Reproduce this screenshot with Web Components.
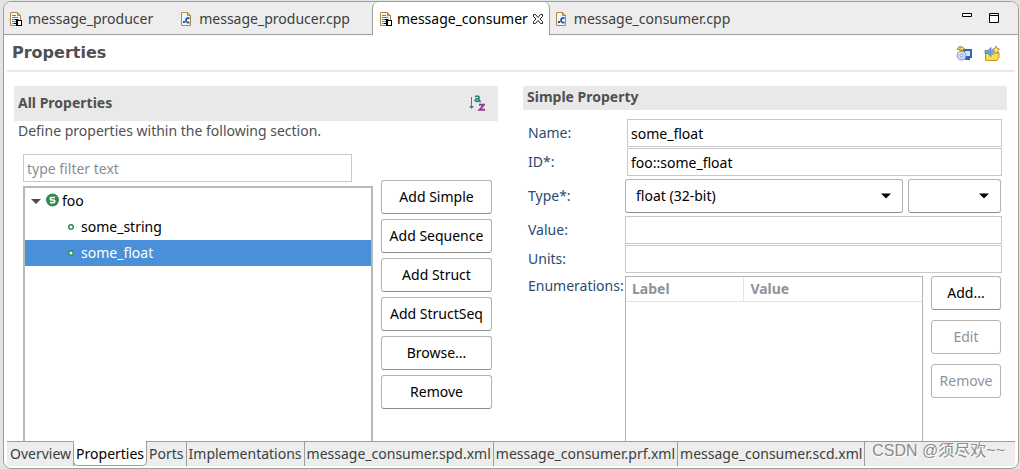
<!DOCTYPE html>
<html lang="en">
<head>
<meta charset="utf-8">
<title>message_consumer - Properties</title>
<style>
  html, body { margin: 0; }
  body {
    min-height: 100vh;
    display: flex;
    background: #e4e4e4;
    font: 14px/20px "Noto Sans", "Noto Sans CJK SC", sans-serif;
    color: #000;
  }
</style>
</head>
<body>
<editor-window></editor-window>

<template id="t-window">
  <style>
    :host { display: flex; flex: 1; min-width: 0; padding: 1px 1px 0 3px; }
    * { box-sizing: border-box; }
    .frame {
      flex: 1; min-width: 0; display: flex; flex-direction: column;
      background: #fff; border: 1px solid #9d9e9b; border-radius: 8px; overflow: hidden;
    }
    .tabs { display: flex; height: 33px; background: linear-gradient(#9d9e9b, #9d9e9b) bottom / 100% 1px no-repeat #ededed; }
    .controls { margin-left: auto; display: flex; gap: 15px; padding: 8px 18px 0 0; }
    .controls button, .tools button { display: block; border: 0; padding: 0; background: none; height: 16px; }
    header { display: flex; align-items: center; justify-content: space-between; height: 37px; margin: 0 3px; padding: 0 15px 0 5px; border-bottom: 2px solid #e8e8e8; }
    h1 { margin: 0; font: bold 16px/20px "DejaVu Sans", sans-serif; color: #505050; }
    .tools { display: flex; gap: 12px; }
    main { flex: 1; display: grid; grid-template-columns: minmax(0, 1fr) minmax(0, 1fr); gap: 25px; padding: 14px 11px 0 10px; }
    footer { display: flex; height: 25px; margin: 0 3px 2px; padding-left: 1px; background: linear-gradient(#9d9e9b, #9d9e9b) top / 100% 1px no-repeat #ededed; }
    .mark { margin-left: auto; padding-right: 10px; font: 16px/20px "Liberation Sans", "Noto Sans CJK SC", sans-serif; color: #8c8c8c; text-shadow: 1px 1px 0 #fff; white-space: nowrap; }
  </style>
  <div class="frame">
    <div class="tabs" role="tablist" aria-label="Open editors">
      <editor-tab icon="doc">message_producer</editor-tab>
      <editor-tab icon="cfile">message_producer.cpp</editor-tab>
      <editor-tab icon="doc" active>message_consumer</editor-tab>
      <editor-tab icon="cfile">message_consumer.cpp</editor-tab>
      <div class="controls">
        <button aria-label="Minimize"><ui-icon name="min"></ui-icon></button>
        <button aria-label="Maximize"><ui-icon name="max"></ui-icon></button>
      </div>
    </div>
    <header>
      <h1>Properties</h1>
      <div class="tools">
        <button aria-label="Deploy"><ui-icon name="deploy"></ui-icon></button>
        <button aria-label="Export"><ui-icon name="export"></ui-icon></button>
      </div>
    </header>
    <main>
      <section-panel heading="All Properties" tall>
        <ui-icon slot="action" name="sort"></ui-icon>
        <property-browser></property-browser>
      </section-panel>
      <section-panel heading="Simple Property">
        <property-form></property-form>
      </section-panel>
    </main>
    <footer role="tablist" aria-label="Pages">
      <page-tab>Overview</page-tab>
      <page-tab active>Properties</page-tab>
      <page-tab>Ports</page-tab>
      <page-tab>Implementations</page-tab>
      <page-tab>message_consumer.spd.xml</page-tab>
      <page-tab>message_consumer.prf.xml</page-tab>
      <page-tab>message_consumer.scd.xml</page-tab>
      <span class="mark">CSDN @须尽欢~~</span>
    </footer>
  </div>
</template>

<template id="t-etab">
  <style>
    :host { display: block; }
    button { display: flex; align-items: center; height: 32px; padding: 2px 22px 0 5px; gap: 3px; border: 0; background: none; font: inherit; color: #3a3f40; white-space: nowrap; }
    .close { display: none; }
    :host([active]) { background: #fff; border: solid #9d9e9b; border-width: 0 1px; border-radius: 6px 6px 0 0; height: 33px; }
    :host([active]) button { color: #000; padding-right: 3px; gap: 2px; padding-left: 6px; }
    :host([active]) .close { display: block; }
  </style>
  <button role="tab"><ui-icon class="kind"></ui-icon><slot></slot><ui-icon class="close" name="close"></ui-icon></button>
</template>

<template id="t-ptab">
  <style>
    :host { display: block; margin-top: 1px; border-right: 1px solid #9d9e9b; }
    button { height: 23px; padding: 0 2px; border: 0; background: none; font: inherit; color: #3a3f40; white-space: nowrap; }
    :host([active]) { margin: 0 0 0 -1px; background: #fff; border: solid #9d9e9b; border-width: 0 1px 1px; border-radius: 0 0 5px 5px; }
    :host([active]) button { color: #000; height: 24px; padding-top: 1px; }
  </style>
  <button role="tab"><slot></slot></button>
</template>

<template id="t-panel">
  <style>
    :host { display: flex; flex-direction: column; min-width: 0; }
    header { box-sizing: border-box; display: flex; align-items: center; justify-content: space-between; height: 24px; padding: 0 13px 2px 4px; background: #e9e9e9; border-radius: 2px 2px 0 0; }
    :host([tall]) header { height: 35px; }
    h2 { margin: 0; font: bold 14px/20px "Noto Sans", sans-serif; color: #505050; }
  </style>
  <header><h2></h2><slot name="action"></slot></header>
  <slot></slot>
</template>

<template id="t-button">
  <style>
    :host { display: block; }
    button { box-sizing: border-box; width: 100%; height: 34px; padding: 0; border: 1px solid #b4b4b0; border-bottom-color: #8f8f8a; border-radius: 3px; background: #fff; font: inherit; color: #000; white-space: nowrap; }
    button:disabled { color: #8f9394; border-color: #b4b4b0; }
  </style>
  <button type="button"><slot></slot></button>
</template>

<template id="t-browser">
  <style>
    :host { flex: 1; display: flex; flex-direction: column; }
    * { box-sizing: border-box; }
    p { margin: 0; padding-left: 4px; color: #505050; }
    .cols { flex: 1; display: grid; grid-template-columns: minmax(0, 1fr) 111px; gap: 8px; padding: 0 6px 0 9px; }
    .list { display: flex; flex-direction: column; gap: 4px; padding-top: 13px; }
    input { height: 28px; margin-right: 21px; padding: 0 3px; border: 1px solid #c8c8c8; border-radius: 0; font: inherit; color: #000; }
    input::placeholder { color: #8b8e8f; opacity: 1; }
    .tree { flex: 1; border: 2px solid #b8b8b5; border-bottom: 0; }
    .buttons { display: flex; flex-direction: column; gap: 5px; padding-top: 39px; }
  </style>
  <p>Define properties within the following section.</p>
  <div class="cols">
    <div class="list">
      <input type="text" placeholder="type filter text" aria-label="Filter">
      <div class="tree" role="tree">
        <tree-row icon="struct" open>foo</tree-row>
        <tree-row icon="simple" child>some_string</tree-row>
        <tree-row icon="simple" child selected>some_float</tree-row>
      </div>
    </div>
    <div class="buttons">
      <push-button>Add Simple</push-button>
      <push-button>Add Sequence</push-button>
      <push-button>Add Struct</push-button>
      <push-button>Add StructSeq</push-button>
      <push-button>Browse...</push-button>
      <push-button>Remove</push-button>
    </div>
  </div>
</template>

<template id="t-row">
  <style>
    :host { display: flex; align-items: center; height: 26px; padding-left: 3px; }
    :host([child]) { padding-left: 38px; }
    :host([selected]) { background: #4a90d9; color: #fff; }
    .kind { margin-right: 2px; }
    .arrow { display: none; }
    :host([open]) .arrow { display: block; }
  </style>
  <ui-icon class="arrow" name="expand"></ui-icon><ui-icon class="kind"></ui-icon><slot></slot>
</template>

<template id="t-form">
  <style>
    :host { flex: 1; display: flex; padding: 9px 5px 0; }
    * { box-sizing: border-box; }
    form { flex: 1; display: grid; grid-template-columns: 97px minmax(0, 1fr); grid-template-rows: repeat(5, auto) 1fr; row-gap: 1px; align-items: center; }
    label, .label { color: #2b4a70; }
    input { width: 100%; height: 28px; padding: 0 3px; border: 1px solid #c8c8c8; border-radius: 0; font: inherit; color: #000; }
    .short { padding-left: 2px; }
    .short, .full { display: flex; }
    .selects { display: grid; grid-template-columns: minmax(0, 3fr) minmax(0, 1fr); gap: 5px; margin: 2px 1px 2px 0; }
    .pick { display: grid; align-items: center; }
    .pick > * { grid-area: 1 / 1; }
    .pick ui-icon { justify-self: end; margin-right: 9px; pointer-events: none; }
    select { appearance: none; width: 100%; height: 34px; padding: 0 10px; border: 1px solid #b4b4b0; border-bottom-color: #8f8f8a; border-radius: 3px; background: #fff; font: inherit; color: #000; }
    .label { align-self: start; margin-top: 2px; }
    .enums { align-self: stretch; display: grid; grid-template-columns: minmax(0, 1fr) 70px; gap: 8px; margin: 2px 1px 0 0; }
    .box { border: 1px solid #b4b4b0; border-bottom: 0; }
    table { width: 100%; table-layout: fixed; border-collapse: separate; border-spacing: 0; }
    th { height: 25px; padding: 0 6px; text-align: left; color: #8f9394; border-bottom: 1px solid #e2e2e2; }
    th:first-child { width: 40%; border-right: 1px solid #e2e2e2; }
    .buttons { display: flex; flex-direction: column; gap: 10px; }
  </style>
  <form>
    <label for="name">Name:</label>
    <div class="short"><input id="name" type="text" value="some_float"></div>
    <label for="id">ID*:</label>
    <div class="short"><input id="id" type="text" value="foo::some_float"></div>
    <label for="type">Type*:</label>
    <div class="selects">
      <div class="pick"><select id="type"><option>float (32-bit)</option></select><ui-icon name="down"></ui-icon></div>
      <div class="pick"><select aria-label="Complex"><option></option></select><ui-icon name="down"></ui-icon></div>
    </div>
    <label for="value">Value:</label>
    <div class="full"><input id="value" type="text"></div>
    <label for="units">Units:</label>
    <div class="full"><input id="units" type="text"></div>
    <span class="label" id="enum-label">Enumerations:</span>
    <div class="enums">
      <div class="box">
        <table aria-labelledby="enum-label"><thead><tr><th>Label</th><th>Value</th></tr></thead></table>
      </div>
      <div class="buttons">
        <push-button>Add...</push-button>
        <push-button disabled>Edit</push-button>
        <push-button disabled>Remove</push-button>
      </div>
    </div>
  </form>
</template>

<script>
  const page = (w) => `<path d="M1.5 1.500h${w - 4}l3 3v10h${1 - w}z" fill="#eef5fd" stroke="#b08a3c"/><path d="M${w - 2.500} 1.500v3h3z" fill="#e9b95a" stroke="#b08a3c"/>`;
  const icons = {
    doc: page(11) + '<g shape-rendering="crispEdges"><path d="M3 4.500h4M3 6.500h6M3 8.500h7M3 10.500h4M3 12.500h3" stroke="#5b83c0"/><path d="M7 9h6v6H7z" fill="#000"/><path d="M9 10h3v4H9z" fill="#fff"/><path d="M6 8.500h3M5 12.500h3" stroke="#000"/></g>',
    cfile: page(10) + '<path d="M3 10h2v2H3z" fill="#1f5aa0"/><path d="M9.500 7.300C7.500 6.500 6 7.300 6 9.300C6 11.300 7.500 12 9.500 11.300" fill="none" stroke="#1f5aa0" stroke-width="1.800"/>',
    close: '<path d="M3.500 3.500h2l2.500 3 2.500-3h2v2l-2.500 2.500 2.500 2.500v2h-2l-2.500-3-2.500 3h-2v-2l2.500-2.500-2.500-2.500z" fill="#fff" stroke="#222"/>',
    min: '<path d="M1.500 3.500h9v3h-9z" fill="#fff" stroke="#000"/>',
    max: '<path d="M1.500 3.500h9v9h-9zM1.500 5.500h9" fill="#fff" stroke="#000"/>',
    sort: '<path d="M2.500 2v11" stroke="#5b6f8a"/><path d="M0 11h5l-2.500 3z" fill="#5b6f8a"/><path d="M6 1.800q3-1.600 4 .2v4.500M10 3.700C6 3.200 5 6.700 8 6.400Q10 6 10 4.700M10 6.400h2" fill="none" stroke="#2a8a7c" stroke-width="1.700"/><path d="M10 9.800h5l-4.500 5H16" fill="none" stroke="#8e3f96" stroke-width="1.900"/>',
    deploy: '<path d="M7 4h9v9H7z" fill="#2f66ad"/><path d="M9 6h5v5H9z" fill="#d3e6f8"/><path d="M9 13h5v2H9z" fill="#2f66ad"/><circle cx="5.500" cy="10.500" r="4.500" fill="#d9d9ec" stroke="#9090b4"/><circle cx="5.500" cy="10.500" r="1.500" fill="#fff" stroke="#6a9bd0"/><path d="M1.500 3.500L4 1V2h2.500l2 2-2 1.500H4v-1H1.500z" fill="#f3d46a" stroke="#a97b16"/>',
    export: '<path d="M1.500 8.500h5l1-2h6l1.500 1v5l-2 3H1.500z" fill="#f9de48" stroke="#c2952c"/><path d="M1 5.500h3l3-3v9l-3-3H1z" fill="#7ba2d6" stroke="#4f77b4" stroke-width=".8"/><path d="M8.500 4v6" stroke="#7ba2d6" stroke-width="1.500"/><path d="M12 1l1 2.500L15.500 4 13.500 6l.5 3-2-1.500L10 9l.5-3L9 4l2-.5z" fill="#fbe9a0" stroke="#a97b16" stroke-width=".8"/>',
    struct: '<circle cx="8.500" cy="7" r="6.500" fill="#35894f"/><path d="M11 4.500H7.500Q6.300 4.500 6.300 5.700T7.500 7h2q1.300 0 1.300 1.300T9.500 9.600H6" fill="none" stroke="#fff" stroke-width="1.600"/>',
    simple: '<circle cx="8" cy="8" r="2.300" fill="#fff" stroke="#2f8f57" stroke-width="1.500"/>',
    expand: '<path d="M3 6h10L8 11z" fill="#4c4c4c"/>',
    down: '<path d="M3 5.500h10L8 10.500z" fill="#000"/>'
  };
  const narrow = { min: 12, max: 12 };

  class Base extends HTMLElement {
    constructor() {
      super();
      const id = this.constructor.template;
      this.attachShadow({ mode: 'open' });
      if (id) this.shadowRoot.append(document.getElementById(id).content.cloneNode(true));
    }
    find(selector) { return this.shadowRoot.querySelector(selector); }
  }

  customElements.define('ui-icon', class extends Base {
    connectedCallback() { this.draw(); }
    static get observedAttributes() { return ['name']; }
    attributeChangedCallback() { this.draw(); }
    draw() {
      const name = this.getAttribute('name');
      const w = narrow[name] || 16;
      this.shadowRoot.innerHTML = '<style>:host{display:block;flex:none}svg{display:block}</style>' +
        `<svg width="${w}" height="16" viewBox="0 0 ${w} 16" aria-hidden="true">${icons[name] || ''}</svg>`;
    }
  });
  customElements.define('push-button', class extends Base {
    static template = 't-button';
    connectedCallback() { this.find('button').disabled = this.hasAttribute('disabled'); }
  });
  customElements.define('editor-tab', class extends Base {
    static template = 't-etab';
    connectedCallback() {
      this.find('.kind').setAttribute('name', this.getAttribute('icon'));
      this.find('button').setAttribute('aria-selected', this.hasAttribute('active'));
    }
  });
  customElements.define('page-tab', class extends Base {
    static template = 't-ptab';
    connectedCallback() { this.find('button').setAttribute('aria-selected', this.hasAttribute('active')); }
  });
  customElements.define('section-panel', class extends Base {
    static template = 't-panel';
    connectedCallback() { this.find('h2').textContent = this.getAttribute('heading'); }
  });
  customElements.define('tree-row', class extends Base {
    static template = 't-row';
    connectedCallback() {
      this.setAttribute('role', 'treeitem');
      this.find('.kind').setAttribute('name', this.getAttribute('icon'));
    }
  });
  customElements.define('property-browser', class extends Base { static template = 't-browser'; });
  customElements.define('property-form', class extends Base { static template = 't-form'; });
  customElements.define('editor-window', class extends Base { static template = 't-window'; });
</script>
</body>
</html>
